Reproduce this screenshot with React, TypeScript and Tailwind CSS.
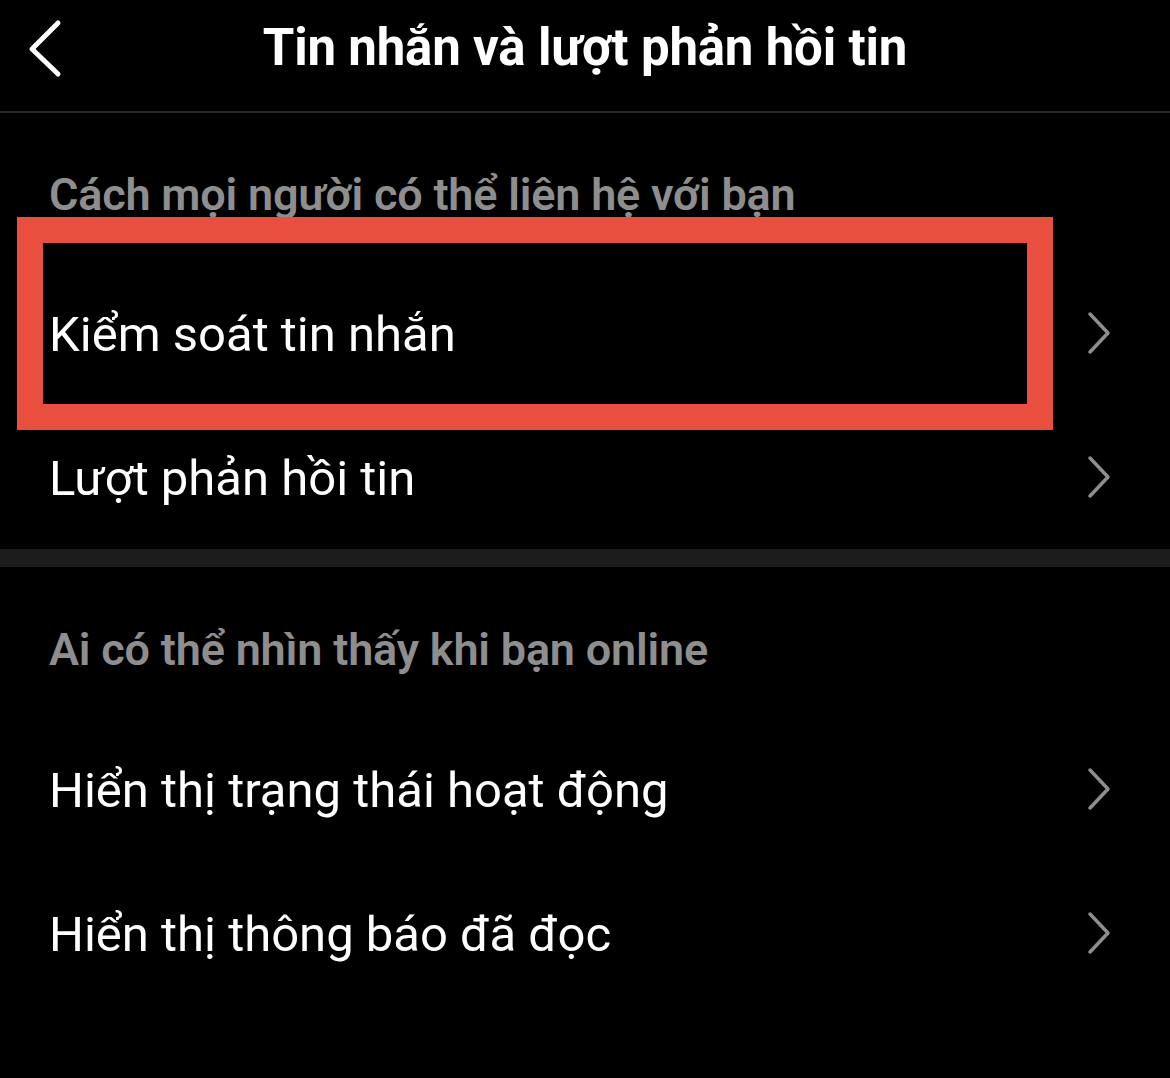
function Chevron() {
  return (
    <svg width="26" height="44" viewBox="0 0 26 44" fill="none" className="shrink-0">
      <path d="M4 3 L22 22 L4 41" stroke="#8e8e8e" strokeWidth="3.5" strokeLinecap="round" strokeLinejoin="round" />
    </svg>
  );
}

function BackIcon() {
  return (
    <svg width="40" height="60" viewBox="0 0 40 60" fill="none" className="absolute left-[24px] top-[18px]">
      <path d="M34 5 L8 31 L34 56" stroke="white" strokeWidth="5" strokeLinecap="round" strokeLinejoin="round" />
    </svg>
  );
}

function Row({ label, highlight }: { label: string; highlight?: boolean }) {
  return (
    <div className="relative flex items-center h-[144px] pl-[49px] pr-[58px]">
      <span className="flex-1 text-[49px] leading-none text-white pt-[3px]">{label}</span>
      <Chevron />
      {highlight && (
        <div className="absolute left-[17px] top-[-44px] w-[1036px] h-[213px] border-[26px] border-[#e84f3f] pointer-events-none" />
      )}
    </div>
  );
}

function SectionTitle({ text, className }: { text: string; className: string }) {
  return (
    <div className={`flex items-center pl-[49px] ${className}`}>
      <span className="text-[45px] leading-none font-semibold text-[#8e8e8e] tracking-[-0.2px]">{text}</span>
    </div>
  );
}

export default function App() {
  return (
    <div className="w-[1170px] h-[1078px] bg-black overflow-hidden" style={{ fontFamily: "Roboto, 'Noto Sans', sans-serif" }}>
      {/* Header */}
      <div className="relative flex items-center justify-center h-[113px] border-b-2 border-[#262626]">
        <BackIcon />
        <h1 className="text-[51px] leading-none font-bold text-white tracking-[-0.2px] -mt-[16px]">
          Tin nhắn và lượt phản hồi tin
        </h1>
      </div>

      <SectionTitle text="Cách mọi người có thể liên hệ với bạn" className="h-[148px] pt-[14px]" />
      <Row label="Kiểm soát tin nhắn" highlight />
      <Row label="Lượt phản hồi tin" />

      <div className="h-[18px] bg-[#1c1c1c]" />

      <SectionTitle text="Ai có thể nhìn thấy khi bạn online" className="h-[150px] pt-[14px]" />
      <Row label="Hiển thị trạng thái hoạt động" />
      <Row label="Hiển thị thông báo đã đọc" />
    </div>
  );
}
